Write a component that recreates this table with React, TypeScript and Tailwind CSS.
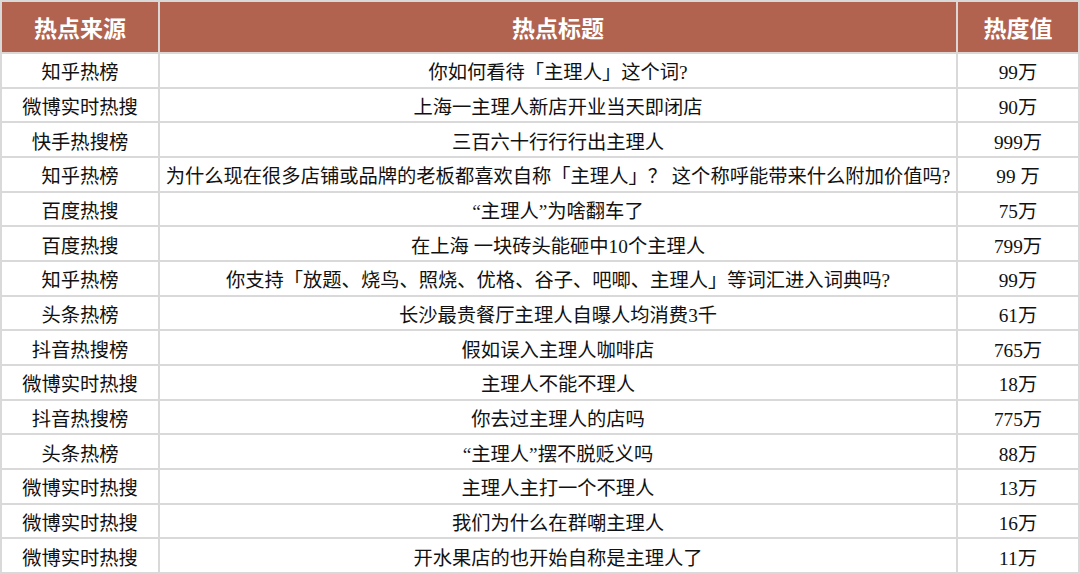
import React from 'react';

// Hot topics around the word "主理人"
const rows = [
  { source: '知乎热榜', title: '你如何看待「主理人」这个词?', heat: '99万' },
  { source: '微博实时热搜', title: '上海一主理人新店开业当天即闭店', heat: '90万' },
  { source: '快手热搜榜', title: '三百六十行行行出主理人', heat: '999万' },
  { source: '知乎热榜', title: '为什么现在很多店铺或品牌的老板都喜欢自称「主理人」？ 这个称呼能带来什么附加价值吗?', heat: '99 万' },
  { source: '百度热搜', title: '“主理人”为啥翻车了', heat: '75万' },
  { source: '百度热搜', title: '在上海 一块砖头能砸中10个主理人', heat: '799万' },
  { source: '知乎热榜', title: '你支持「放题、烧鸟、照烧、优格、谷子、吧唧、主理人」等词汇进入词典吗?', heat: '99万' },
  { source: '头条热榜', title: '长沙最贵餐厅主理人自曝人均消费3千', heat: '61万' },
  { source: '抖音热搜榜', title: '假如误入主理人咖啡店', heat: '765万' },
  { source: '微博实时热搜', title: '主理人不能不理人', heat: '18万' },
  { source: '抖音热搜榜', title: '你去过主理人的店吗', heat: '775万' },
  { source: '头条热榜', title: '“主理人”摆不脱贬义吗', heat: '88万' },
  { source: '微博实时热搜', title: '主理人主打一个不理人', heat: '13万' },
  { source: '微博实时热搜', title: '我们为什么在群嘲主理人', heat: '16万' },
  { source: '微博实时热搜', title: '开水果店的也开始自称是主理人了', heat: '11万' },
];

const headerCell =
  'flex items-center justify-center bg-[#b1634f] text-white font-bold text-[23px] border-r-2 border-b-2 border-[#dcd6d4] font-["Noto_Sans_CJK_SC","Noto_Sans",sans-serif]';

const bodyCell =
  'flex items-center justify-center min-h-0 pt-[5px] leading-none border-r-2 border-b-2 border-[#d9d9d9] text-[19.3px] text-[#111] whitespace-nowrap font-["Liberation_Serif","Noto_Sans_CJK_SC",serif]';

const App = () => {
  return (
    <div className="w-[1080px] h-[574px] bg-white overflow-hidden">
      <div className="grid h-full grid-cols-[158px_798px_1fr] grid-rows-[52px_repeat(15,minmax(0,1fr))] border-l-2 border-t-2 border-[#d9d9d9]">
        <div className={headerCell}>热点来源</div>
        <div className={headerCell}>热点标题</div>
        <div className={headerCell}>热度值</div>
        {rows.map((row, i) => (
          <React.Fragment key={i}>
            <div className={bodyCell}>{row.source}</div>
            <div className={bodyCell}>{row.title}</div>
            <div className={bodyCell}>{row.heat}</div>
          </React.Fragment>
        ))}
      </div>
    </div>
  );
};

export default App;
